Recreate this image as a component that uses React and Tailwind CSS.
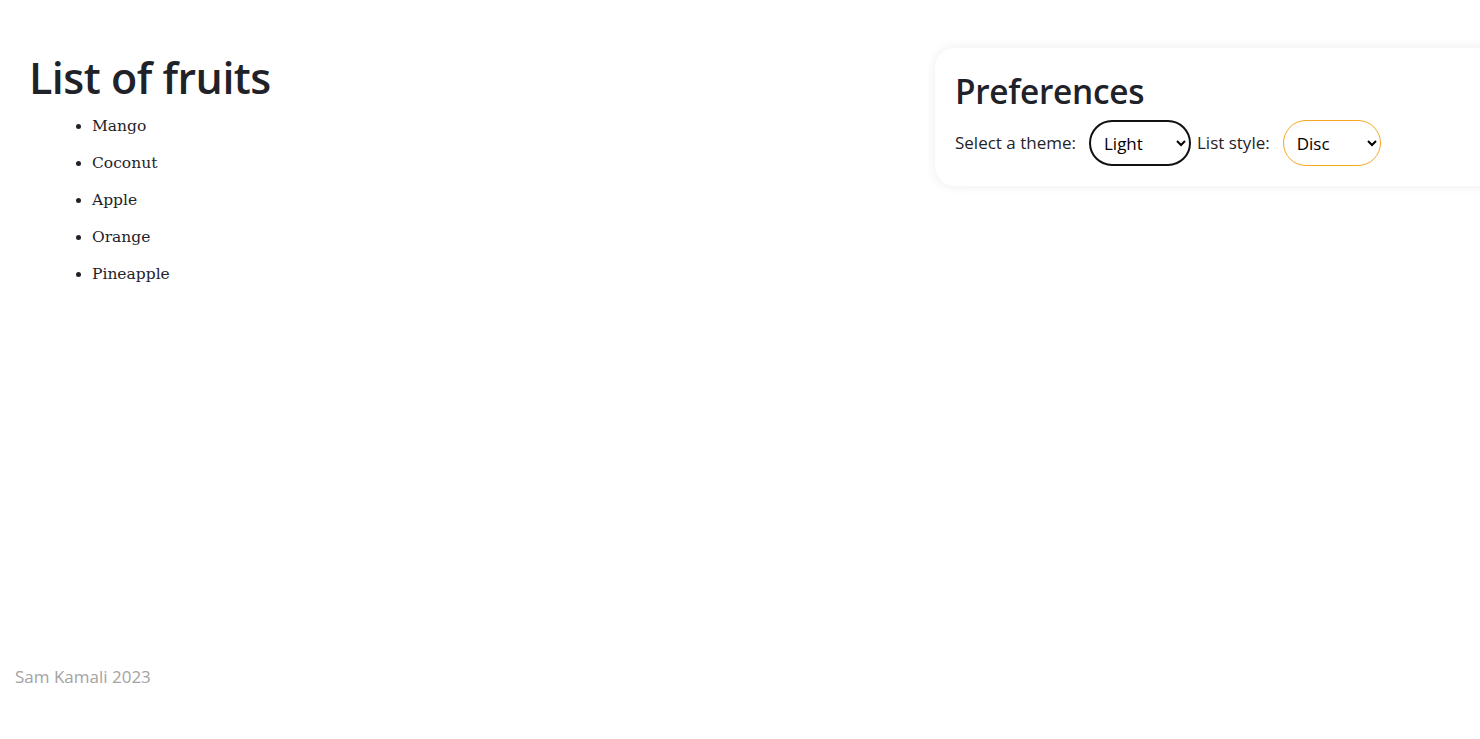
import React from "react";

const sans = { fontFamily: '"Open Sans", "Noto Sans", sans-serif' };

export default function App() {
  const fruits = ["Mango", "Coconut", "Apple", "Orange", "Pineapple"];
  return (
    <div className="min-h-screen w-full overflow-hidden bg-white flex flex-col text-[#1f2329]" style={sans}>
      <div className="flex items-start justify-between">
        <div className="pl-[29px] pt-[50px]">
          <h1 className="text-[43px] leading-[56px] font-semibold tracking-[-0.5px]">List of fruits</h1>
          <ul className="list-disc pl-[63px] mt-[9px] text-[15.5px] leading-[22px]" style={{ fontFamily: '"DejaVu Serif", "Liberation Serif", serif' }}>
            {fruits.map((f) => (
              <li key={f} className="mb-[15px] pl-[0px]">{f}</li>
            ))}
          </ul>
        </div>
        <div className="mt-[48px] mr-[-40px] w-[585px] shrink-0 rounded-[20px] bg-white shadow-[0_0_12px_rgba(0,0,0,0.08)] px-[20px] pt-[20px] pb-[20px]">
          <h2 className="text-[33.4px] leading-[46px] font-semibold tracking-[-0.3px]">Preferences</h2>
          <div className="flex items-center mt-[6px] text-[17px]">
            <label className="mr-[13px]">Select a theme:</label>
            <select className="h-[46px] w-[102px] rounded-full border-2 border-[#111] bg-white pl-[9px] pr-[6px] text-[17px] text-black" defaultValue="Light" style={sans}>
              <option>Light</option>
              <option>Dark</option>
            </select>
            <label className="ml-[6px] mr-[13px]">List style:</label>
            <select className="h-[46px] w-[98px] rounded-full border border-[#f5a623] bg-white pl-[9px] pr-[6px] text-[17px] text-black" defaultValue="Disc" style={sans}>
              <option>Disc</option>
              <option>Circle</option>
              <option>Square</option>
            </select>
          </div>
        </div>
      </div>
      <footer className="mt-auto pl-[15px] pb-[50px] text-[17px] text-[#a3a3a3]">Sam Kamali 2023</footer>
    </div>
  );
}
